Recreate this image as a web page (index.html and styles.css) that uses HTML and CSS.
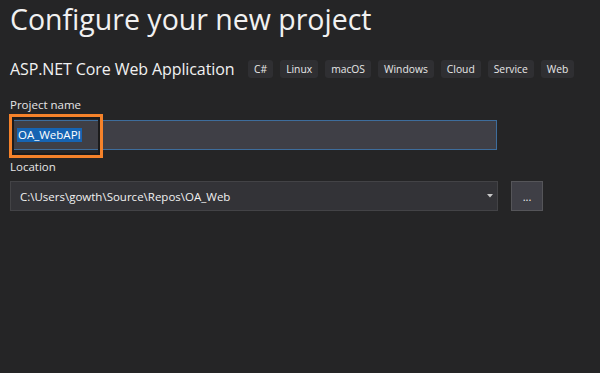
FILE: index.html
```html
<!DOCTYPE html>
<html lang="en">
<head>
  <meta charset="UTF-8">
  <title>Configure your new project</title>
  <link rel="stylesheet" href="styles.css">
</head>
<body>
  <div class="page">
    <h1 class="title">Configure your new project</h1>

    <div class="template">
      <span class="template-name">ASP.NET Core Web Application</span>
      <ul class="tags">
        <li>C#</li>
        <li>Linux</li>
        <li>macOS</li>
        <li>Windows</li>
        <li>Cloud</li>
        <li>Service</li>
        <li>Web</li>
      </ul>
    </div>

    <label class="field-label">Project name</label>
    <div class="field">
      <div class="text-box"><span class="selected">OA_WebAPI</span></div>
      <div class="highlight"></div>
    </div>

    <label class="field-label">Location</label>
    <div class="location-row">
      <div class="combo">
        <span>C:\Users\gowth\Source\Repos\OA_Web</span>
        <svg class="arrow" width="6" height="4" viewBox="0 0 6 4"><path d="M0 0h6L3 3.5z" fill="#c8c8c8"/></svg>
      </div>
      <div class="browse">...</div>
    </div>
  </div>
</body>
</html>
```

FILE: styles.css
```css
body {
  margin: 0;
  background: #252526;
  color: #f1f1f1;
  font-family: 'Open Sans', 'Segoe UI', sans-serif;
}

.page {
  padding: 0 10px;
  width: 580px;
}

.title {
  margin: 0;
  font-size: 28.5px;
  font-weight: 400;
  line-height: 38px;
}

.template {
  display: flex;
  align-items: center;
  margin-top: 22px;
  height: 18px;
}

.template-name {
  font-size: 16px;
  white-space: nowrap;
  flex-shrink: 0;
  width: 238px;
  letter-spacing: -0.1px;
}

.tags {
  list-style: none;
  display: flex;
  gap: 7px;
  margin: 0;
  padding: 0;
}

.tags li {
  background: #2f2f32;
  border-radius: 3px;
  font-size: 10.3px;
  line-height: 18px;
  padding: 0 6px;
  color: #e8e8e8;
  white-space: nowrap;
}

.field-label {
  display: block;
  font-size: 11.5px;
  color: #e6e6e6;
  margin-top: 19px;
  line-height: 16px;
}

.field {
  position: relative;
  margin-top: 7px;
}

.text-box {
  height: 28px;
  background: #3f3f46;
  border: 1px solid #3e6d9c;
  display: flex;
  align-items: center;
  padding-left: 6px;
  width: 479px;
}

.selected {
  background: #1664b3;
  color: #fff;
  font-size: 11.5px;
  line-height: 14px;
  padding: 0 1px;
}

.highlight {
  position: absolute;
  left: -1px;
  top: -6px;
  width: 88px;
  height: 38px;
  border: 3px solid #f5822a;
  box-shadow: inset 0 0 0 2px #1b1b1c;
}

.field + .field-label {
  margin-top: 9px;
}

.location-row {
  display: flex;
  gap: 13px;
  margin-top: 6px;
}

.combo {
  height: 28px;
  background: #333337;
  border: 1px solid #434346;
  display: flex;
  align-items: center;
  justify-content: space-between;
  padding: 0 4px 0 9px;
  font-size: 11.5px;
  color: #f1f1f1;
  width: 473px;
}

.browse {
  width: 30px;
  height: 28px;
  background: #3f3f46;
  border: 1px solid #555559;
  display: flex;
  align-items: center;
  justify-content: center;
  font-size: 11px;
  color: #f1f1f1;
  line-height: 1;
}
```
